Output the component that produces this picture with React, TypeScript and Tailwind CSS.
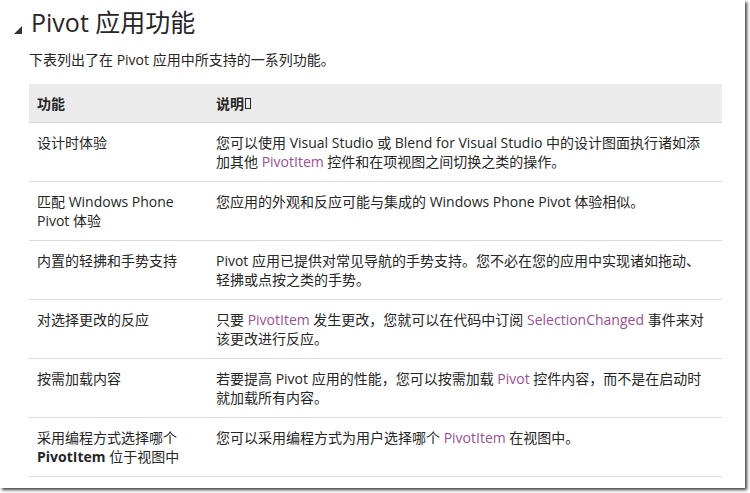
const font = { fontFamily: '"Open Sans", "Noto Sans CJK SC", sans-serif' };

function Link({ children }: { children: React.ReactNode }) {
  return <span className="text-[#9b4f96]">{children}</span>;
}

type Row = { feature: React.ReactNode; desc: React.ReactNode };

const rows: Row[] = [
  {
    feature: <>设计时体验</>,
    desc: (
      <>
        您可以使用 Visual Studio 或 Blend for Visual Studio 中的设计图面执行诸如添
        <br />
        加其他 <Link>PivotItem</Link> 控件和在项视图之间切换之类的操作。
      </>
    ),
  },
  {
    feature: (
      <>
        匹配 Windows Phone
        <br />
        Pivot 体验
      </>
    ),
    desc: <>您应用的外观和反应可能与集成的 Windows Phone Pivot 体验相似。</>,
  },
  {
    feature: <>内置的轻拂和手势支持</>,
    desc: (
      <>
        Pivot 应用已提供对常见导航的手势支持。您不必在您的应用中实现诸如拖动、
        <br />
        轻拂或点按之类的手势。
      </>
    ),
  },
  {
    feature: <>对选择更改的反应</>,
    desc: (
      <>
        只要 <Link>PivotItem</Link> 发生更改，您就可以在代码中订阅 <Link>SelectionChanged</Link> 事件来对
        <br />
        该更改进行反应。
      </>
    ),
  },
  {
    feature: <>按需加载内容</>,
    desc: (
      <>
        若要提高 Pivot 应用的性能，您可以按需加载 <Link>Pivot</Link> 控件内容，而不是在启动时
        <br />
        就加载所有内容。
      </>
    ),
  },
  {
    feature: (
      <>
        采用编程方式选择哪个
        <br />
        <span className="font-bold">PivotItem</span> 位于视图中
      </>
    ),
    desc: (
      <>
        您可以采用编程方式为用户选择哪个 <Link>PivotItem</Link> 在视图中。
      </>
    ),
  },
];

export default function App() {
  return (
    <div className="h-[493px] w-[750px] overflow-hidden bg-white" style={font}>
      <div className="h-[488px] w-[745px] bg-white text-[#262626] shadow-[2px_2px_3px_rgba(0,0,0,0.75)]">
        {/* Titolo */}
        <div className="flex items-end pl-[14px] pt-[4px]">
          <svg width="8" height="8" viewBox="0 0 8 8" className="mb-[6px] mr-[9px]">
            <polygon points="8,0 8,8 0,8" fill="#333" />
          </svg>
          <h1 className="text-[25px] leading-[36px] text-[#262626]">Pivot 应用功能</h1>
        </div>

        <p className="ml-[29px] mt-[10px] text-[14px] leading-[19px]">
          下表列出了在 Pivot 应用中所支持的一系列功能。
        </p>

        <div className="ml-[29px] mt-[15px] w-[693px] text-[14px] leading-[19px]">
          <div className="grid h-[39px] grid-cols-[179px_1fr] items-center border-b border-[#d6d6d6] bg-[#ebebeb] font-bold">
            <span className="px-2">功能</span>
            <span className="flex items-center px-2">
              说明
              <span className="ml-[1px] inline-block h-[11px] w-[6px] border border-[#262626]" />
            </span>
          </div>
          {rows.map((r, i) => (
            <div key={i} className="grid grid-cols-[179px_1fr] border-b border-[#dcdcdc] py-[10px]">
              <div className="whitespace-nowrap px-2">{r.feature}</div>
              <div className="whitespace-nowrap px-2">{r.desc}</div>
            </div>
          ))}
        </div>
      </div>
    </div>
  );
}
